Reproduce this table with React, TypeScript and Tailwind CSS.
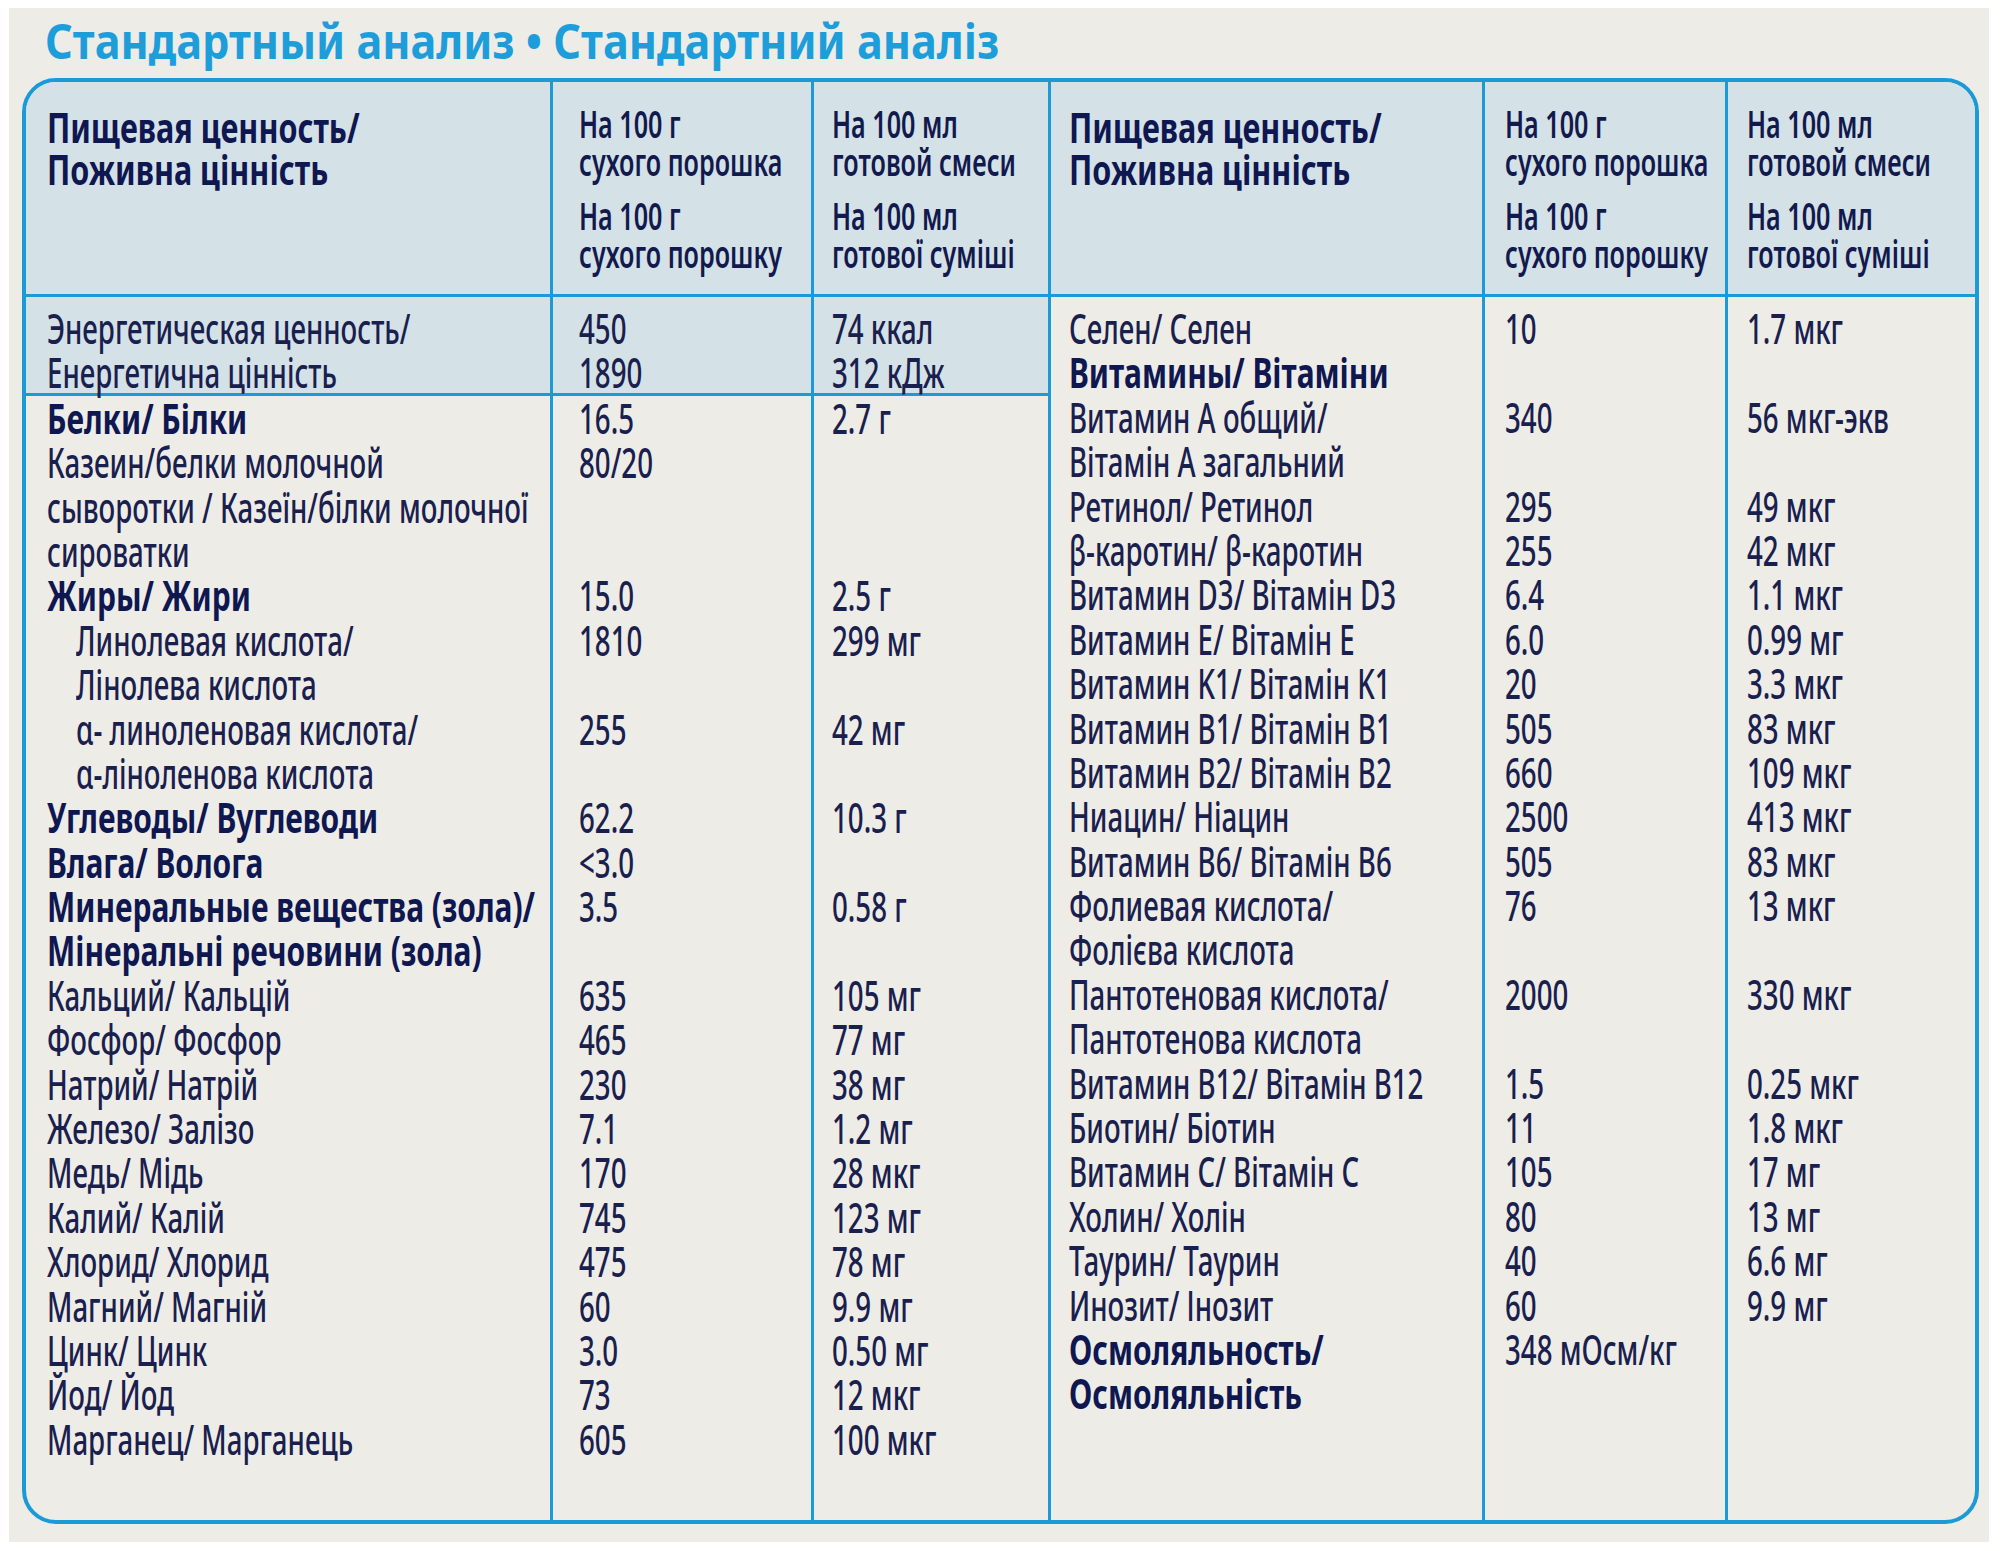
import React from 'react';

type Row = { label: string; v1?: string; v2?: string; bold?: boolean; indent?: boolean };

const leftRows: Row[] = [
    { label: 'Энергетическая ценность/', v1: '450', v2: '74 ккал' },
    { label: 'Енергетична цінність', v1: '1890', v2: '312 кДж' },
    { label: 'Белки/ Білки', v1: '16.5', v2: '2.7 г', bold: true },
    { label: 'Казеин/белки молочной', v1: '80/20' },
    { label: 'сыворотки / Казеїн/білки молочної' },
    { label: 'сироватки' },
    { label: 'Жиры/ Жири', v1: '15.0', v2: '2.5 г', bold: true },
    { label: 'Линолевая кислота/', v1: '1810', v2: '299 мг', indent: true },
    { label: 'Лінолева кислота', indent: true },
    { label: 'α- линоленовая кислота/', v1: '255', v2: '42 мг', indent: true },
    { label: 'α-ліноленова кислота', indent: true },
    { label: 'Углеводы/ Вуглеводи', v1: '62.2', v2: '10.3 г', bold: true },
    { label: 'Влага/ Волога', v1: '<3.0', bold: true },
    { label: 'Минеральные вещества (зола)/', v1: '3.5', v2: '0.58 г', bold: true },
    { label: 'Мінеральні речовини (зола)', bold: true },
    { label: 'Кальций/ Кальцій', v1: '635', v2: '105 мг' },
    { label: 'Фосфор/ Фосфор', v1: '465', v2: '77 мг' },
    { label: 'Натрий/ Натрій', v1: '230', v2: '38 мг' },
    { label: 'Железо/ Залізо', v1: '7.1', v2: '1.2 мг' },
    { label: 'Медь/ Мідь', v1: '170', v2: '28 мкг' },
    { label: 'Калий/ Калій', v1: '745', v2: '123 мг' },
    { label: 'Хлорид/ Хлорид', v1: '475', v2: '78 мг' },
    { label: 'Магний/ Магній', v1: '60', v2: '9.9 мг' },
    { label: 'Цинк/ Цинк', v1: '3.0', v2: '0.50 мг' },
    { label: 'Йод/ Йод', v1: '73', v2: '12 мкг' },
    { label: 'Марганец/ Марганець', v1: '605', v2: '100 мкг' },
];

const rightRows: Row[] = [
    { label: 'Селен/ Селен', v1: '10', v2: '1.7 мкг' },
    { label: 'Витамины/ Вітаміни', bold: true },
    { label: 'Витамин A общий/', v1: '340', v2: '56 мкг-экв' },
    { label: 'Вітамін A загальний' },
    { label: 'Ретинол/ Ретинол', v1: '295', v2: '49 мкг' },
    { label: 'β-каротин/ β-каротин', v1: '255', v2: '42 мкг' },
    { label: 'Витамин D3/ Вітамін D3', v1: '6.4', v2: '1.1 мкг' },
    { label: 'Витамин E/ Вітамін E', v1: '6.0', v2: '0.99 мг' },
    { label: 'Витамин K1/ Вітамін K1', v1: '20', v2: '3.3 мкг' },
    { label: 'Витамин B1/ Вітамін B1', v1: '505', v2: '83 мкг' },
    { label: 'Витамин B2/ Вітамін B2', v1: '660', v2: '109 мкг' },
    { label: 'Ниацин/ Ніацин', v1: '2500', v2: '413 мкг' },
    { label: 'Витамин B6/ Вітамін B6', v1: '505', v2: '83 мкг' },
    { label: 'Фолиевая кислота/', v1: '76', v2: '13 мкг' },
    { label: 'Фолієва кислота' },
    { label: 'Пантотеновая кислота/', v1: '2000', v2: '330 мкг' },
    { label: 'Пантотенова кислота' },
    { label: 'Витамин B12/ Вітамін B12', v1: '1.5', v2: '0.25 мкг' },
    { label: 'Биотин/ Біотин', v1: '11', v2: '1.8 мкг' },
    { label: 'Витамин C/ Вітамін C', v1: '105', v2: '17 мг' },
    { label: 'Холин/ Холін', v1: '80', v2: '13 мг' },
    { label: 'Таурин/ Таурин', v1: '40', v2: '6.6 мг' },
    { label: 'Инозит/ Інозит', v1: '60', v2: '9.9 мг' },
    { label: 'Осмоляльность/', v1: '348 мОсм/кг', bold: true },
    { label: 'Осмоляльність', bold: true },
];

// condensed look: Noto Sans squeezed horizontally
function Line({ text, bold, indent }: { text?: string; bold?: boolean; indent?: boolean }) {
    return (
        <div
            className={`h-[44.4px] leading-[44.4px] whitespace-nowrap ${bold ? 'font-bold text-[#0e1750]' : 'font-medium text-[#19204d]'} ${indent ? 'pl-[29px]' : ''}`}
        >
            <span className={`inline-block origin-left ${bold ? 'scale-x-[0.73]' : 'scale-x-[0.675]'}`}>{text ?? ''}</span>
        </div>
    );
}

function HeaderName() {
    return (
        <div className="pt-[24px] font-bold text-[41px] leading-[42px] text-[#0e1750] whitespace-nowrap">
            <div className="origin-left scale-x-[0.745]">Пищевая ценность/</div>
            <div className="origin-left scale-x-[0.745]">Поживна цінність</div>
        </div>
    );
}

function HeaderUnit({ ru1, ru2, ua1, ua2 }: { ru1: string; ru2: string; ua1: string; ua2: string }) {
    return (
        <div className="pt-[23px] text-[37px] leading-[38px] font-semibold text-[#121a4d] whitespace-nowrap">
            <div className="origin-left scale-x-[0.68]">{ru1}</div>
            <div className="origin-left scale-x-[0.68]">{ru2}</div>
            <div className="mt-[16px] origin-left scale-x-[0.68]">{ua1}</div>
            <div className="origin-left scale-x-[0.68]">{ua2}</div>
        </div>
    );
}

export default function App() {
    const line = 'border-[#1b9ad8]';
    return (
        <div className="w-[2000px] h-[1551px] bg-white pt-[8px] pl-[9px] font-['Noto_Sans','Open_Sans',sans-serif]">
            <div className="w-[1980px] h-[1534px] bg-[#edece7] pl-[13px] pt-[6px]">
                <h1 className="pl-[23px] h-[64px] text-[48px] leading-[54px] font-bold text-[#1d9edb] whitespace-nowrap">
                    <span className="inline-block origin-left scale-x-[0.9]">Стандартный анализ • Стандартний аналіз</span>
                </h1>

                <div className={`w-[1957px] h-[1446px] border-4 ${line} rounded-[34px] overflow-hidden flex flex-col text-[41px]`}>
                    {/* header */}
                    <div className={`h-[215px] shrink-0 bg-[#d4e1e7] border-b-[3px] ${line} flex`}>
                        <div className={`w-[527px] border-r-[3px] ${line} pl-[21px]`}>
                            <HeaderName />
                        </div>
                        <div className={`w-[261px] border-r-[3px] ${line} pl-[26px]`}>
                            <HeaderUnit ru1="На 100 г" ru2="сухого порошка" ua1="На 100 г" ua2="сухого порошку" />
                        </div>
                        <div className={`w-[237px] border-r-[3px] ${line} pl-[18px]`}>
                            <HeaderUnit ru1="На 100 мл" ru2="готовой смеси" ua1="На 100 мл" ua2="готової суміші" />
                        </div>
                        <div className={`w-[434px] border-r-[3px] ${line} pl-[18px]`}>
                            <HeaderName />
                        </div>
                        <div className={`w-[243px] border-r-[3px] ${line} pl-[20px]`}>
                            <HeaderUnit ru1="На 100 г" ru2="сухого порошка" ua1="На 100 г" ua2="сухого порошку" />
                        </div>
                        <div className="w-[247px] pl-[19px]">
                            <HeaderUnit ru1="На 100 мл" ru2="готовой смеси" ua1="На 100 мл" ua2="готової суміші" />
                        </div>
                    </div>

                    {/* body */}
                    <div className="flex-1 flex">
                        {/* left half: energy block on top of each column */}
                        {[
                            { w: 'w-[527px]', pl: 'pl-[21px]', key: 'label' as const },
                            { w: 'w-[261px]', pl: 'pl-[26px]', key: 'v1' as const },
                            { w: 'w-[237px]', pl: 'pl-[18px]', key: 'v2' as const },
                        ].map((col) => (
                            <div key={col.key} className={`${col.w} border-r-[3px] ${line} flex flex-col`}>
                                <div className={`h-[98.8px] shrink-0 bg-[#d4e1e7] border-b-[3px] ${line} pt-[9px] ${col.pl}`}>
                                    {leftRows.slice(0, 2).map((r, i) => (
                                        <Line key={i} text={r[col.key]} />
                                    ))}
                                </div>
                                <div className={col.pl}>
                                    {leftRows.slice(2).map((r, i) => (
                                        <Line
                                            key={i}
                                            text={r[col.key]}
                                            bold={col.key === 'label' && r.bold}
                                            indent={col.key === 'label' && r.indent}
                                        />
                                    ))}
                                </div>
                            </div>
                        ))}

                        {/* right half */}
                        {[
                            { w: 'w-[434px] border-r-[3px]', pl: 'pl-[18px]', key: 'label' as const },
                            { w: 'w-[243px] border-r-[3px]', pl: 'pl-[20px]', key: 'v1' as const },
                            { w: 'w-[247px]', pl: 'pl-[19px]', key: 'v2' as const },
                        ].map((col) => (
                            <div key={col.key} className={`${col.w} ${line} pt-[9px] ${col.pl}`}>
                                {rightRows.map((r, i) => (
                                    <Line key={i} text={r[col.key]} bold={col.key === 'label' && r.bold} />
                                ))}
                            </div>
                        ))}
                    </div>
                </div>
            </div>
        </div>
    );
}
